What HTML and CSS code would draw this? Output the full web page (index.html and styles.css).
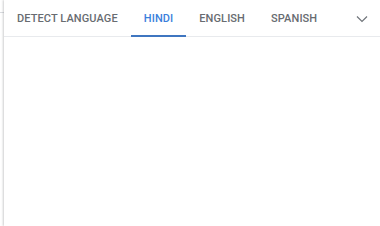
FILE: index.html
```html
<!DOCTYPE html>
<html>
<head>
<meta charset="utf-8">
<link rel="stylesheet" href="styles.css">
</head>
<body>
<div class="backline"></div>
<div class="card">
  <div class="tabs">
    <div class="tab">DETECT LANGUAGE</div>
    <div class="tab active">HINDI</div>
    <div class="tab">ENGLISH</div>
    <div class="tab">SPANISH</div>
    <div class="more">
      <svg width="12" height="8" viewBox="0 0 12 8"><path d="M1 1.5 L6 6.5 L11 1.5" fill="none" stroke="#70757a" stroke-width="1.2"/></svg>
    </div>
  </div>
  <div class="body"></div>
</div>
</body>
</html>
```

FILE: styles.css
```css
html, body {
  margin: 0;
  padding: 0;
  background: #ffffff;
  width: 380px;
  height: 226px;
  overflow: hidden;
  font-family: Roboto, "Liberation Sans", sans-serif;
}
.backline {
  position: absolute;
  left: 0;
  top: 12px;
  width: 6px;
  height: 1px;
  background: #dadce0;
}
.card {
  position: relative;
  margin-left: 4px;
  height: 226px;
  background: #fff;
  box-shadow: -1px 0 2px rgba(60, 64, 67, 0.25);
  display: flex;
  flex-direction: column;
}
.tabs {
  display: flex;
  align-items: stretch;
  height: 36px;
  border-bottom: 1px solid #e8eaed;
}
.tab {
  display: flex;
  align-items: center;
  padding: 0 13px;
  font-size: 11px;
  font-weight: 500;
  letter-spacing: 0.1px;
  color: #686c71;
  border-bottom: 2px solid transparent;
  margin-bottom: -1px;
  padding-top: 1px;
}
.tab.active {
  color: #3b7fdc;
  border-bottom-color: #3f76c0;
}
.more {
  margin-left: auto;
  width: 36px;
  display: flex;
  align-items: center;
  justify-content: center;
  padding-top: 1px;
}
.body {
  flex: 1;
}
```
